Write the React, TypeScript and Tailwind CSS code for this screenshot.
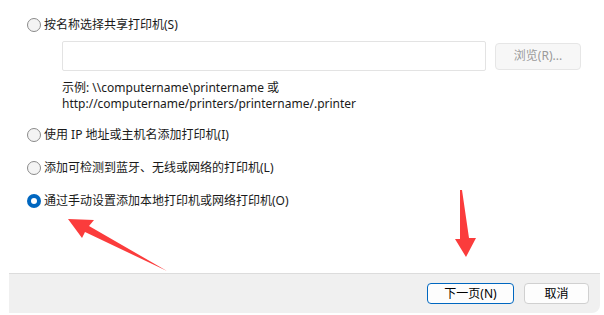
import React from "react";

const font = { fontFamily: '"Noto Sans", "Noto Sans CJK SC", sans-serif' };

function Radio({ checked = false }: { checked?: boolean }) {
  if (checked) {
    return (
      <span className="w-[14px] h-[14px] rounded-full bg-[#0067c0] flex items-center justify-center shrink-0">
        <span className="w-[6px] h-[6px] rounded-full bg-white" />
      </span>
    );
  }
  return <span className="w-[14px] h-[14px] rounded-full border border-[#8a8a8a] bg-[#f4f4f4] shrink-0" />;
}

function Row({ label, checked }: { label: string; checked?: boolean }) {
  return (
    <div className="flex items-center gap-[3px] h-[15px]">
      <Radio checked={checked} />
      <span className="text-[12px] leading-[15px] text-[#1a1a1a] whitespace-nowrap">{label}</span>
    </div>
  );
}

export default function App() {
  return (
    <div className="relative w-[604px] h-[315px] bg-white overflow-hidden flex flex-col" style={font}>
      <div className="flex-1 pl-[27px] pt-[17px]">
        <Row label="按名称选择共享打印机(S)" />
        <div className="flex items-center mt-[9px] ml-[35px]">
          <div className="w-[424px] h-[30px] border border-[#e3e3e3] rounded-[2px] bg-white" />
          <div className="ml-[9px] w-[86px] h-[27px] border border-[#e6e6e6] rounded-[4px] bg-[#f7f7f7] flex items-center justify-center text-[12px] text-[#9a9a9a]">
            浏览(R)...
          </div>
        </div>
        <div className="ml-[35px] mt-[9px] text-[12px] leading-[16px] text-[#1a1a1a]">
          <div>示例: \\computername\printername 或</div>
          <div>http://computername/printers/printername/.printer</div>
        </div>
        <div className="mt-[15px] flex flex-col gap-[18px]">
          <Row label="使用 IP 地址或主机名添加打印机(I)" />
          <Row label="添加可检测到蓝牙、无线或网络的打印机(L)" />
          <Row label="通过手动设置添加本地打印机或网络打印机(O)" checked />
        </div>
      </div>
      <div className="ml-[9px] mr-[4px] mb-[2px] h-[40px] bg-[#f0f0f0] border-t border-[#dcdcdc] rounded-br-[8px] flex items-center justify-end pr-[11px] gap-[10px]">
        <div className="w-[87px] h-[21px] border border-[#0067c0] rounded-[4px] bg-[#fdfdfd] flex items-center justify-center text-[12px] text-black">
          下一页(N)
        </div>
        <div className="w-[65px] h-[21px] border border-[#d0d0d0] rounded-[4px] bg-[#fdfdfd] flex items-center justify-center text-[12px] text-black">
          取消
        </div>
      </div>
      <svg className="absolute left-0 top-0 pointer-events-none" width="604" height="315" viewBox="0 0 604 315">
        <polygon points="68,219 94,220 89,226 167,271 85,232 82,238" fill="#fb3c3c" />
        <polygon points="460,190 462,190 469,238 476,238 466,257 455,239 460,239" fill="#fb3c3c" />
      </svg>
    </div>
  );
}
